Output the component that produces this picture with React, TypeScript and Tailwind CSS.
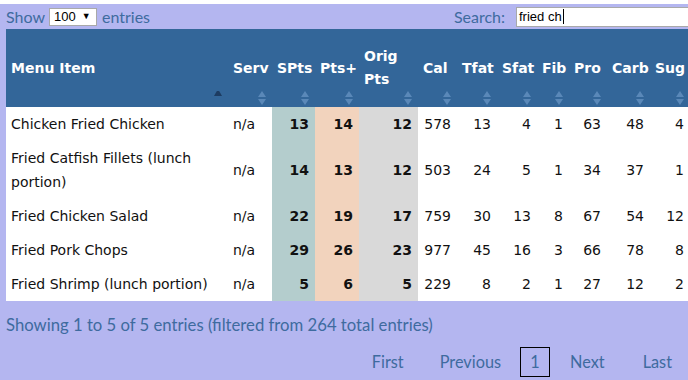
import React from "react";

type Row = { name: string; serv: string; v: number[] };

const rows: Row[] = [
  { name: "Chicken Fried Chicken", serv: "n/a", v: [13, 14, 12, 578, 13, 4, 1, 63, 48, 4] },
  { name: "Fried Catfish Fillets (lunch portion)", serv: "n/a", v: [14, 13, 12, 503, 24, 5, 1, 34, 37, 1] },
  { name: "Fried Chicken Salad", serv: "n/a", v: [22, 19, 17, 759, 30, 13, 8, 67, 54, 12] },
  { name: "Fried Pork Chops", serv: "n/a", v: [29, 26, 23, 977, 45, 16, 3, 66, 78, 8] },
  { name: "Fried Shrimp (lunch portion)", serv: "n/a", v: [5, 6, 5, 229, 8, 2, 1, 27, 12, 2] },
];

const widths = [222, 44, 43, 44, 59, 39, 40, 40, 32, 38, 43, 40];

function SortIcon({ active }: { active?: boolean }) {
  return (
    <svg width="8" height="14" viewBox="0 0 8 14" className="absolute bottom-[2px] right-[6px]">
      {active ? (
        <polygon points="0,7 4,0 8,7" fill="#1d3c62" transform="translate(0,-2)" />
      ) : (
        <>
          <polygon points="0,6 4,0 8,6" fill="#5a88b8" />
          <polygon points="0,8 8,8 4,14" fill="#5a88b8" />
        </>
      )}
    </svg>
  );
}

const dv = { fontFamily: '"DejaVu Sans", Verdana, sans-serif' };
const lt = { fontFamily: 'Lato, "Open Sans", sans-serif' };
const ar = { fontFamily: '"Liberation Sans", Arial, sans-serif' };

export default function App() {
  const headers: React.ReactNode[] = [
    "Menu Item",
    "Serv",
    "SPts",
    "Pts+",
    <>
      Orig
      <br />
      Pts
    </>,
    "Cal",
    "Tfat",
    "Sfat",
    "Fib",
    "Pro",
    "Carb",
    "Sug",
  ];
  const colBg = ["", "", "bg-[#b4cdcd]", "bg-[#f2d3bd]", "bg-[#d9d9d9]"];

  return (
    <div className="w-[688px] h-[380px] overflow-hidden bg-white">
      <div className="mt-[4px] w-[690px] h-[376px] bg-[#b4b6f0] pl-[6px]">
        <div className="h-[25px] flex items-center justify-between text-[#3e6b9f] text-[16px]" style={lt}>
          <div className="flex items-center">
            <span>Show</span>
            <span
              className="ml-[4px] mr-[5px] w-[48px] h-[18px] bg-white border border-[#a9a9a9] flex items-center pl-[4px] text-[13px] text-black"
              style={ar}
            >
              100
              <span className="ml-[6px] text-[9px]">▼</span>
            </span>
            <span>entries</span>
          </div>
          <div className="flex items-center">
            <span>Search:</span>
            <span
              className="ml-[11px] w-[174px] h-[20px] bg-white border border-[#a9a9a9] flex items-center pl-[2px] text-[13px] text-black"
              style={ar}
            >
              fried ch<span className="inline-block w-[1px] h-[15px] bg-black ml-[1px]" />
            </span>
          </div>
        </div>
        <table className="table-fixed border-collapse w-[684px]" style={dv}>
          <colgroup>
            {widths.map((w, i) => (
              <col key={i} style={{ width: w }} />
            ))}
          </colgroup>
          <thead>
            <tr className="bg-[#336699] h-[78px]">
              {headers.map((h, i) => (
                <th
                  key={i}
                  className="relative text-left align-middle pl-[5px] text-white font-bold text-[14px] leading-[23px] whitespace-nowrap"
                >
                  {h}
                  <SortIcon active={i === 0} />
                </th>
              ))}
            </tr>
          </thead>
          <tbody className="bg-white text-[14px] leading-[24px] text-[#111]">
            {rows.map((r, ri) => (
              <tr key={ri}>
                <td className="py-[5px] pl-[5px] pr-[5px] align-middle">{r.name}</td>
                <td className="py-[5px] pl-[5px] align-middle">{r.serv}</td>
                {r.v.map((n, ci) => (
                  <td
                    key={ci}
                    className={
                      "py-[5px] pr-[6px] text-right align-middle " +
                      (ci < 3 ? "font-bold " : "") +
                      (colBg[ci + 2] || "")
                    }
                  >
                    {n}
                  </td>
                ))}
              </tr>
            ))}
          </tbody>
        </table>
        <div className="pt-[14px] text-[16.7px] leading-[20px] text-[#3e6b9f]" style={lt}>
          Showing 1 to 5 of 5 entries (filtered from 264 total entries)
        </div>
        <div className="mt-[12px] flex justify-end items-center text-[16.3px] text-[#3e6b9f]" style={lt}>
          <span className="px-[18px]">First</span>
          <span className="px-[18px]">Previous</span>
          <span className="ml-[1px] w-[30px] h-[30px] border border-black flex items-center justify-center">1</span>
          <span className="px-[20px]">Next</span>
          <span className="px-[18px]">Last</span>
        </div>
      </div>
    </div>
  );
}
